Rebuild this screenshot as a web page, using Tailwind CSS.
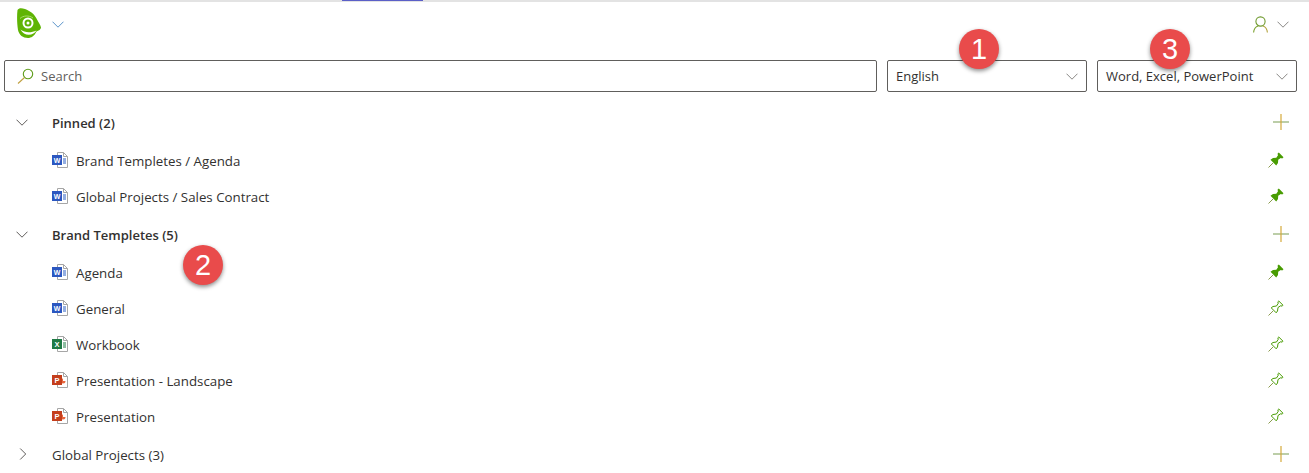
<!DOCTYPE html>
<html lang="en">
<head>
<meta charset="UTF-8">
<title>Templates</title>
<script src="https://cdn.jsdelivr.net/npm/@tailwindcss/browser@4"></script>
</head>
<body class="bg-white font-['Open_Sans',sans-serif] text-[13px] text-[#323130] overflow-hidden">
<svg class="hidden">
  <defs>
    <symbol id="chev" viewBox="0 0 12 7"><path d="M.5.7 6 6.200 11.500.7" fill="none" stroke="currentColor" stroke-width="1"/></symbol>
    <symbol id="plus" viewBox="0 0 16 16"><path d="M0 8h16" stroke="#8fae6e" stroke-width="1.200"/><path d="M8 0v16" stroke="#d6a93a" stroke-width="1.200"/></symbol>
    <symbol id="pin" viewBox="0 0 16 16"><path d="M.5 15.500 5 11" stroke="#8a9a4c" stroke-width="1" fill="none"/><path d="M2.500 7.800 5 6 8.300 5.800 10 3.200 9.500 1.800 10.800.5 15.500 5.200 14.200 6.500 12.800 6 10.200 7.700 10 11 8.200 13.500Z" fill="#489c02"/></symbol>
    <symbol id="pinoff" viewBox="0 0 16 16"><path d="M.5 15.500 5 11" stroke="#8a9a4c" stroke-width="1" fill="none"/><path d="M3.200 7.800 5 6.500 8.500 6 10.300 3.200 9.800 1.900 10.800 1 15 5.200 14.100 6.200 12.800 5.700 10 7.500 9.500 11 8.200 12.800Z" fill="none" stroke="#489c02" stroke-width="1"/></symbol>
    <symbol id="word" viewBox="0 0 16 16"><path d="M5.500.5h6l4 4v11h-10Z" fill="#fff" stroke="#a6a6a6"/><path d="M11.500.5v4h4" fill="none" stroke="#a6a6a6"/><path d="M11 7h3M11 9h3M11 11h3" stroke="#2b5fc4"/><rect y="3" width="10" height="10" fill="#2b57c0"/><text x="5" y="10.500" font-size="7" font-weight="700" text-anchor="middle" fill="#fff" font-family="Liberation Sans">W</text></symbol>
    <symbol id="excel" viewBox="0 0 16 16"><path d="M5.500.5h6l4 4v11h-10Z" fill="#fff" stroke="#a6a6a6"/><path d="M11.500.5v4h4" fill="none" stroke="#a6a6a6"/><path d="M11 7h3M11 9h3M11 11h3" stroke="#1f7a45"/><rect y="3" width="10" height="10" fill="#1f7a45"/><text x="5" y="10.500" font-size="7.500" font-weight="700" text-anchor="middle" fill="#fff" font-family="Liberation Sans">X</text></symbol>
    <symbol id="ppt" viewBox="0 0 16 16"><path d="M5.500.5h6l4 4v11h-10Z" fill="#fff" stroke="#a6a6a6"/><path d="M11.500.5v4h4" fill="none" stroke="#a6a6a6"/><path d="M11 6.500a2.500 2.500 0 1 0 2.500 2.500H11Z" fill="#e8683f"/><rect y="3" width="10" height="10" fill="#c43e1c"/><text x="5" y="10.500" font-size="7.500" font-weight="700" text-anchor="middle" fill="#fff" font-family="Liberation Sans">P</text></symbol>
  </defs>
</svg>

<div class="relative h-[473px] w-[1309px]">
  <!-- top strip -->
  <div class="h-[2px] bg-[#e3e3e3] pl-[342px]"><div class="h-[1px] w-[81px] bg-[#5b5fc7]"></div></div>

  <!-- header -->
  <header class="flex h-[58px] items-center justify-between pb-[14px] pl-[16px] pr-[20px]">
    <div class="flex items-center gap-[10px]">
      <svg class="h-[32px] w-[26px]" viewBox="0 0 26 32">
        <path d="M1.500 2C3 -.5 6 0 9 1C14 3 18.500 6 20.500 10.500C22.500 14.500 24.500 17 25 19.500C25 21.500 22.500 22.500 20.500 23.500C18.500 28 15 30 12 30C7 30 3 27 2 22C1 16 .8 8 1.500 2Z" fill="#5fb404"/>
        <circle cx="12" cy="15" r="5.500" fill="#fff"/>
        <circle cx="12" cy="15" r="3.500" fill="#5fb404"/>
        <circle cx="12" cy="15" r="1.500" fill="#fff"/>
        <path d="M4.500 21.500C9 25 15 25 20.500 22.500C18 27.500 8 29 4.500 21.500Z" fill="#fff"/>
        <path d="M4 10.500C7 7.500 13 7 17 10" fill="none" stroke="#a8dc6c" stroke-width="1"/>
      </svg>
      <svg class="mt-[1px] h-[7px] w-[12px] text-[#5b93c9]"><use href="#chev"/></svg>
    </div>
    <div class="flex items-center gap-[9px]">
      <svg class="h-[17px] w-[15px]" viewBox="0 0 15 17" fill="none" stroke-width="1.100"><circle cx="7.500" cy="5.500" r="4.600" stroke="#6f9a2e"/><path d="M.6 16.500C1 12.500 3.500 10.500 5 10" stroke="#7aa02c"/><path d="M10 10C11.500 10.500 14 12.500 14.400 16.500" stroke="#b3a23a"/></svg>
      <svg class="h-[7px] w-[12px] text-[#8a8886]"><use href="#chev"/></svg>
    </div>
  </header>

  <!-- filters -->
  <div class="flex gap-[10px] pl-[4px] pr-[12px]">
    <div class="flex h-[32px] flex-1 items-center gap-[7px] rounded-[2px] border border-[#605e5c] pl-[12px]">
      <svg class="h-[16px] w-[17px]" viewBox="0 0 17 16" fill="none"><circle cx="11" cy="6" r="4.700" stroke="#5e9c1a" stroke-width="1.100"/><path d="M7.500 9.500 1 15.500" stroke="#c0a040" stroke-width="1.100"/></svg>
      <span class="pt-[2px] text-[#605e5c]">Search</span>
    </div>
    <div class="flex h-[32px] w-[200px] items-center justify-between rounded-[2px] border border-[#605e5c] pl-[8px] pr-[8px]">
      <span class="pt-[2px]">English</span>
      <svg class="h-[7px] w-[12px] text-[#8a8886]"><use href="#chev"/></svg>
    </div>
    <div class="flex h-[32px] w-[200px] items-center justify-between rounded-[2px] border border-[#605e5c] pl-[8px] pr-[8px]">
      <span class="pt-[2px]">Word, Excel, PowerPoint</span>
      <svg class="h-[7px] w-[12px] text-[#8a8886]"><use href="#chev"/></svg>
    </div>
  </div>

  <!-- list -->
  <main class="mt-[10px] pl-[16px] pr-[20px]">
    <section>
      <div class="flex h-[40px] items-center">
        <svg class="mr-[24px] h-[7px] w-[12px] text-[#605e5c]"><use href="#chev"/></svg>
        <span class="flex-1 pt-[4px] font-semibold">Pinned (2)</span>
        <svg class="h-[16px] w-[16px]"><use href="#plus"/></svg>
      </div>
      <div class="flex h-[36px] items-center pl-[36px] pr-[5px] text-[13.3px]"><svg class="mr-[8px] h-[16px] w-[16px]"><use href="#word"/></svg><span class="flex-1 pt-[4px]">Brand Templetes / Agenda</span><svg class="h-[16px] w-[16px]"><use href="#pin"/></svg></div>
      <div class="flex h-[36px] items-center pl-[36px] pr-[5px] text-[13.3px]"><svg class="mr-[8px] h-[16px] w-[16px]"><use href="#word"/></svg><span class="flex-1 pt-[4px]">Global Projects / Sales Contract</span><svg class="h-[16px] w-[16px]"><use href="#pin"/></svg></div>
    </section>
    <section>
      <div class="flex h-[40px] items-center">
        <svg class="mr-[24px] h-[7px] w-[12px] text-[#605e5c]"><use href="#chev"/></svg>
        <span class="flex-1 pt-[4px] font-semibold">Brand Templetes (5)</span>
        <svg class="h-[16px] w-[16px]"><use href="#plus"/></svg>
      </div>
      <div class="flex h-[36px] items-center pl-[36px] pr-[5px] text-[13.3px]"><svg class="mr-[8px] h-[16px] w-[16px]"><use href="#word"/></svg><span class="flex-1 pt-[4px]">Agenda</span><svg class="h-[16px] w-[16px]"><use href="#pin"/></svg></div>
      <div class="flex h-[36px] items-center pl-[36px] pr-[5px] text-[13.3px]"><svg class="mr-[8px] h-[16px] w-[16px]"><use href="#word"/></svg><span class="flex-1 pt-[4px]">General</span><svg class="h-[16px] w-[16px]"><use href="#pinoff"/></svg></div>
      <div class="flex h-[36px] items-center pl-[36px] pr-[5px] text-[13.3px]"><svg class="mr-[8px] h-[16px] w-[16px]"><use href="#excel"/></svg><span class="flex-1 pt-[4px]">Workbook</span><svg class="h-[16px] w-[16px]"><use href="#pinoff"/></svg></div>
      <div class="flex h-[36px] items-center pl-[36px] pr-[5px] text-[13.3px]"><svg class="mr-[8px] h-[16px] w-[16px]"><use href="#ppt"/></svg><span class="flex-1 pt-[4px]">Presentation - Landscape</span><svg class="h-[16px] w-[16px]"><use href="#pinoff"/></svg></div>
      <div class="flex h-[36px] items-center pl-[36px] pr-[5px] text-[13.3px]"><svg class="mr-[8px] h-[16px] w-[16px]"><use href="#ppt"/></svg><span class="flex-1 pt-[4px]">Presentation</span><svg class="h-[16px] w-[16px]"><use href="#pinoff"/></svg></div>
    </section>
    <section>
      <div class="flex h-[40px] items-center text-[13.3px]">
        <svg class="ml-[2px] mr-[24px] h-[12px] w-[10px] text-[#605e5c]" viewBox="0 0 7 12"><path d="M.7.5 6.200 6 .7 11.500" fill="none" stroke="currentColor"/></svg>
        <span class="flex-1 pt-[4px]">Global Projects (3)</span>
        <svg class="h-[16px] w-[16px]"><use href="#plus"/></svg>
      </div>
    </section>
  </main>

  <!-- numbered callouts -->
  <div class="absolute left-[959px] top-[29px] flex h-[40px] w-[40px] items-center justify-center rounded-full bg-[#e94b4b] pt-[1px] font-['Liberation_Sans',sans-serif] text-[29px] text-white shadow-[0_2px_4px_rgba(0,0,0,0.45)]">1</div>
  <div class="absolute left-[1150px] top-[29px] flex h-[40px] w-[40px] items-center justify-center rounded-full bg-[#e94b4b] pt-[1px] font-['Liberation_Sans',sans-serif] text-[29px] text-white shadow-[0_2px_4px_rgba(0,0,0,0.45)]">3</div>
  <div class="absolute left-[183px] top-[245px] flex h-[40px] w-[40px] items-center justify-center rounded-full bg-[#e94b4b] pt-[1px] font-['Liberation_Sans',sans-serif] text-[29px] text-white shadow-[0_2px_4px_rgba(0,0,0,0.45)]">2</div>
</div>
</body>
</html>
